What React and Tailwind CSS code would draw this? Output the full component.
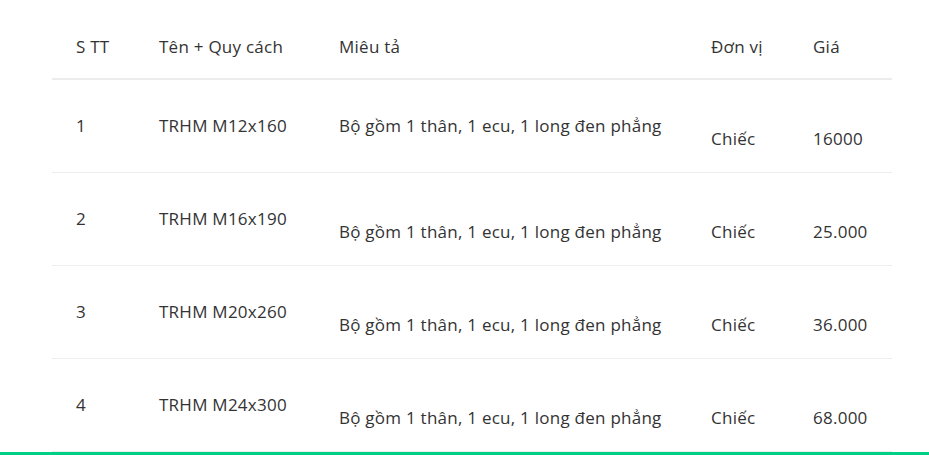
import React from 'react';

const rows = [
  { stt: '1', name: 'TRHM M12x160', desc: 'Bộ gồm 1 thân, 1 ecu, 1 long đen phẳng', unit: 'Chiếc', price: '16000', low: ['unit', 'price'] },
  { stt: '2', name: 'TRHM M16x190', desc: 'Bộ gồm 1 thân, 1 ecu, 1 long đen phẳng', unit: 'Chiếc', price: '25.000', low: ['desc', 'unit', 'price'] },
  { stt: '3', name: 'TRHM M20x260', desc: 'Bộ gồm 1 thân, 1 ecu, 1 long đen phẳng', unit: 'Chiếc', price: '36.000', low: ['desc', 'unit', 'price'] },
  { stt: '4', name: 'TRHM M24x300', desc: 'Bộ gồm 1 thân, 1 ecu, 1 long đen phẳng', unit: 'Chiếc', price: '68.000', low: ['desc', 'unit', 'price'] }
];

const cols = [
  { key: 'stt', label: 'S TT', w: 'w-[83px]' },
  { key: 'name', label: 'Tên + Quy cách', w: 'w-[180px]' },
  { key: 'desc', label: 'Miêu tả', w: 'w-[372px]' },
  { key: 'unit', label: 'Đơn vị', w: 'w-[102px]' },
  { key: 'price', label: 'Giá', w: 'w-[103px]' }
];

const App = () => {
  return (
    <div className="w-[929px] h-[455px] bg-white overflow-hidden flex flex-col" style={{ fontFamily: '"Open Sans", "Noto Sans", sans-serif' }}>
      <div className="flex-1 px-[52px] overflow-hidden">
        <table className="w-[840px] table-fixed border-collapse text-left text-[17px] tracking-[0.25px] leading-6 text-[#333]">
          <thead>
            <tr className="border-b-2 border-[#ececec]">
              {cols.map(c => (
                <th key={c.key} className={`${c.w} pl-6 pt-[35px] pb-[19px] font-normal align-top`}>{c.label}</th>
              ))}
            </tr>
          </thead>
          <tbody>
            {rows.map(r => (
              <tr key={r.stt} className="h-[93px] border-b border-[#eeeeee]">
                {cols.map(c => (
                  <td key={c.key} className={`pl-6 align-top whitespace-nowrap ${r.low.includes(c.key) ? 'pt-[47px]' : 'pt-[34px]'}`}>
                    {r[c.key]}
                  </td>
                ))}
              </tr>
            ))}
          </tbody>
        </table>
      </div>
      <div className="h-[3px] w-full bg-[#00cf86] shrink-0"></div>
    </div>
  );
};

export default App;
